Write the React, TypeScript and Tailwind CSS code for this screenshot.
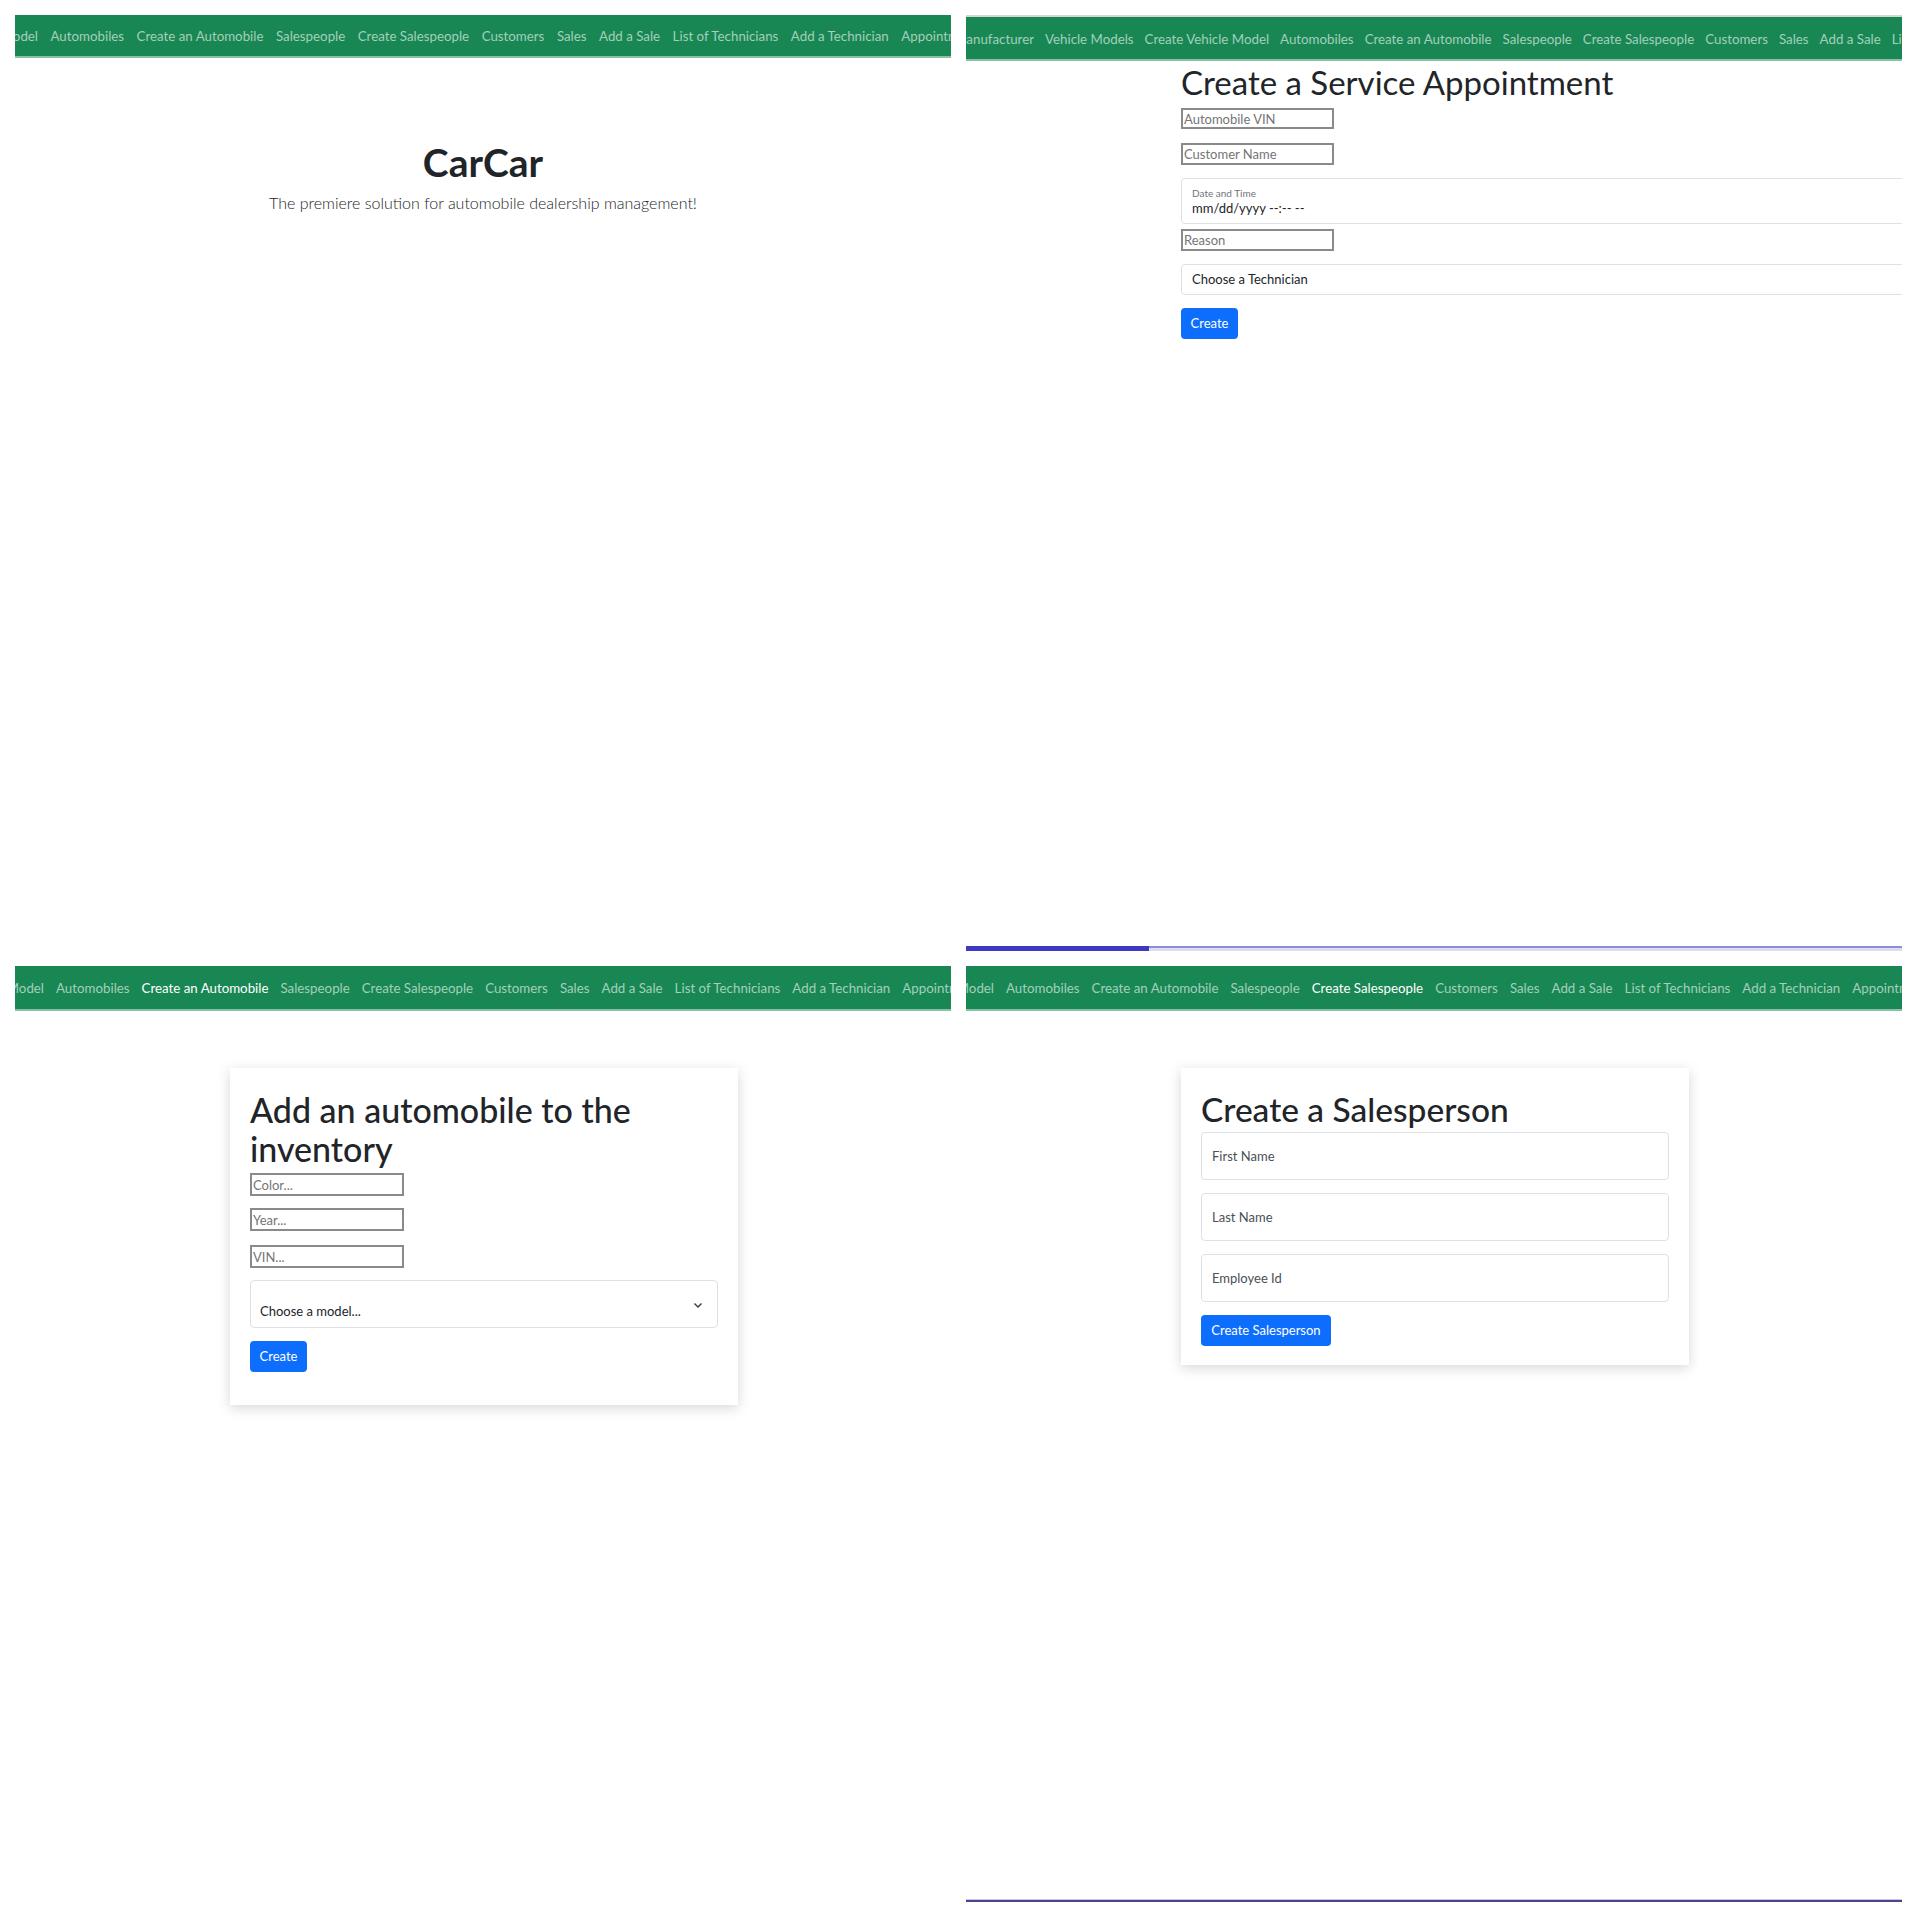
import React from "react";

const F = "font-['Lato','Segoe_UI',sans-serif]";

function NavItem({ label, active }: { label: string; active?: boolean }) {
  return (
    <span className={`shrink-0 ${active ? "text-white" : "text-[#a3cfbb]"}`}>{label}</span>
  );
}

function NavBar({
  lead,
  leadClass,
  items,
  active,
  extraClass,
}: {
  lead: string;
  leadClass: string;
  items: string[];
  active?: string;
  extraClass: string;
}) {
  return (
    <div
      className={`flex shrink-0 items-center overflow-hidden whitespace-nowrap bg-[#198754] border-b-2 border-b-[#86c3a3] text-[13.3px] ${extraClass}`}
    >
      <div className={`flex shrink-0 justify-end overflow-hidden ${leadClass}`}>
        <span className="shrink-0 text-[#a3cfbb]">{lead}</span>
      </div>
      {items.map((it) => (
        <NavItem key={it} label={it} active={it === active} />
      ))}
    </div>
  );
}

const MAIN_ITEMS = [
  "Automobiles",
  "Create an Automobile",
  "Salespeople",
  "Create Salespeople",
  "Customers",
  "Sales",
  "Add a Sale",
  "List of Technicians",
  "Add a Technician",
  "Appointments",
];

function PlainInput({ placeholder, className }: { placeholder: string; className: string }) {
  return (
    <input
      readOnly
      placeholder={placeholder}
      className={`block border-2 border-[#8a8a8a] bg-white px-[1px] text-[13px] text-[#212529] outline-none placeholder:text-[#757575] ${className}`}
    />
  );
}

function BlueButton({ label, className }: { label: string; className: string }) {
  return (
    <button className={`flex items-center justify-center rounded-[4px] bg-[#0d6efd] text-[13px] text-white ${className}`}>
      {label}
    </button>
  );
}

function HomeQuadrant() {
  return (
    <div className="flex h-[936px] w-[936px] flex-col overflow-hidden bg-white">
      <NavBar
        lead="Create Vehicle Model"
        leadClass="w-[23px]"
        items={MAIN_ITEMS}
        extraClass="h-[43px] gap-[12.5px] pt-[2px]"
      />
      <div className="flex flex-col items-center pt-[80px] text-[#212529]">
        <h1 className="text-[39px] font-bold leading-[48px]">CarCar</h1>
        <p className="mt-[5px] text-[16px] font-light leading-[24px]">
          The premiere solution for automobile dealership management!
        </p>
      </div>
    </div>
  );
}

function AppointmentQuadrant() {
  return (
    <div className="flex h-[936px] w-[936px] flex-col overflow-hidden bg-white">
      <NavBar
        lead="Create a Manufacturer"
        leadClass="w-[68px]"
        items={[
          "Vehicle Models",
          "Create Vehicle Model",
          "Automobiles",
          "Create an Automobile",
          "Salespeople",
          "Create Salespeople",
          "Customers",
          "Sales",
          "Add a Sale",
          "List of Technicians",
        ]}
        extraClass="h-[46px] gap-[11px] pt-[4px] border-t-2 border-t-[#d6d6d6]"
      />
      <div className="flex flex-1 flex-col pl-[215px] text-[#212529]">
        <h1 className="mt-[3px] text-[33px] leading-[37px]">Create a Service Appointment</h1>
        <PlainInput placeholder="Automobile VIN" className="mt-[7px] h-[21px] w-[153px]" />
        <PlainInput placeholder="Customer Name" className="mt-[14px] h-[22px] w-[153px]" />
        <div className="mt-[13px] flex h-[46px] w-[800px] shrink-0 flex-col justify-center rounded-[4px] border border-[#dee2e6] pl-[10px]">
          <span className="text-[10px] leading-[12px] text-[#6c757d]">Date and Time</span>
          <span className="mt-[2px] text-[13px] leading-[15px] text-[#212529]">mm/dd/yyyy --:-- --</span>
        </div>
        <PlainInput placeholder="Reason" className="mt-[5px] h-[22px] w-[153px]" />
        <div className="mt-[13px] flex h-[31px] w-[800px] shrink-0 items-center rounded-[4px] border border-[#dee2e6] pl-[10px] pt-[1px] text-[13px] text-[#212529]">
          Choose a Technician
        </div>
        <BlueButton label="Create" className="mt-[13px] h-[31px] w-[57px]" />
        <div className="mt-auto flex h-[5px] w-[936px] -ml-[215px] shrink-0">
          <div className="h-full w-[183px] bg-[#3e39c2]" />
          <div className="h-full flex-1 border-t-2 border-t-[#8e8ed2] bg-[#dcdcf4]" />
        </div>
      </div>
    </div>
  );
}

function Card({ children, className }: { children: React.ReactNode; className: string }) {
  return (
    <div className={`ml-[215px] w-[508px] bg-white px-[20px] shadow-[0_3px_12px_rgba(0,0,0,0.16)] ${className}`}>
      {children}
    </div>
  );
}

function AutomobileQuadrant() {
  return (
    <div className="flex h-[936px] w-[936px] flex-col overflow-hidden bg-white">
      <NavBar
        lead="Create Vehicle Model"
        leadClass="w-[29px]"
        items={MAIN_ITEMS}
        active="Create an Automobile"
        extraClass="h-[45px] gap-[12px] pt-[3px]"
      />
      <Card className="mt-[57px] pt-[22px] pb-[33px] text-[#212529]">
        <h1 className="text-[34px] font-medium leading-[39px]">Add an automobile to the inventory</h1>
        <PlainInput placeholder="Color..." className="mt-[5px] h-[23px] w-[154px]" />
        <PlainInput placeholder="Year..." className="mt-[12px] h-[23px] w-[154px]" />
        <PlainInput placeholder="VIN..." className="mt-[14px] h-[23px] w-[154px]" />
        <div className="relative mt-[12px] flex h-[48px] w-full items-end rounded-[4px] border border-[#dee2e6] pb-[6px] pl-[9px] text-[13px]">
          <span>Choose a model...</span>
          <svg
            className="absolute right-[14px] top-[20px]"
            width="10"
            height="8"
            viewBox="0 0 10 8"
            fill="none"
            stroke="#343a40"
            strokeWidth="1.4"
          >
            <path d="M1.5 2.5 5 6 8.5 2.5" />
          </svg>
        </div>
        <BlueButton label="Create" className="mt-[13px] h-[31px] w-[57px]" />
      </Card>
    </div>
  );
}

function FloatingInput({ label, className }: { label: string; className: string }) {
  return (
    <div className={`flex h-[48px] w-full items-center rounded-[4px] border border-[#dee2e6] pl-[10px] pt-[1px] text-[13px] text-[#495057] ${className}`}>
      {label}
    </div>
  );
}

function SalespersonQuadrant() {
  return (
    <div className="flex h-[936px] w-[936px] flex-col overflow-hidden bg-white">
      <NavBar
        lead="Create Vehicle Model"
        leadClass="w-[28px]"
        items={MAIN_ITEMS}
        active="Create Salespeople"
        extraClass="h-[45px] gap-[12px] pt-[3px]"
      />
      <Card className="mt-[57px] pt-[22px] pb-[19px] text-[#212529]">
        <h1 className="text-[33.5px] font-medium leading-[39px]">Create a Salesperson</h1>
        <FloatingInput label="First Name" className="mt-[3px]" />
        <FloatingInput label="Last Name" className="mt-[13px]" />
        <FloatingInput label="Employee Id" className="mt-[13px]" />
        <BlueButton label="Create Salesperson" className="mt-[13px] h-[31px] w-[130px]" />
      </Card>
      <div className="mt-auto h-[3px] w-full shrink-0 border-t border-t-[#c9c6ee] bg-[#4b4586]" />
    </div>
  );
}

export default function App() {
  return (
    <div className={`h-[1917px] w-[1917px] bg-white p-[15px] ${F}`}>
      <div className="grid grid-cols-[936px_936px] grid-rows-[936px_936px] gap-[15px]">
        <HomeQuadrant />
        <AppointmentQuadrant />
        <AutomobileQuadrant />
        <SalespersonQuadrant />
      </div>
    </div>
  );
}
